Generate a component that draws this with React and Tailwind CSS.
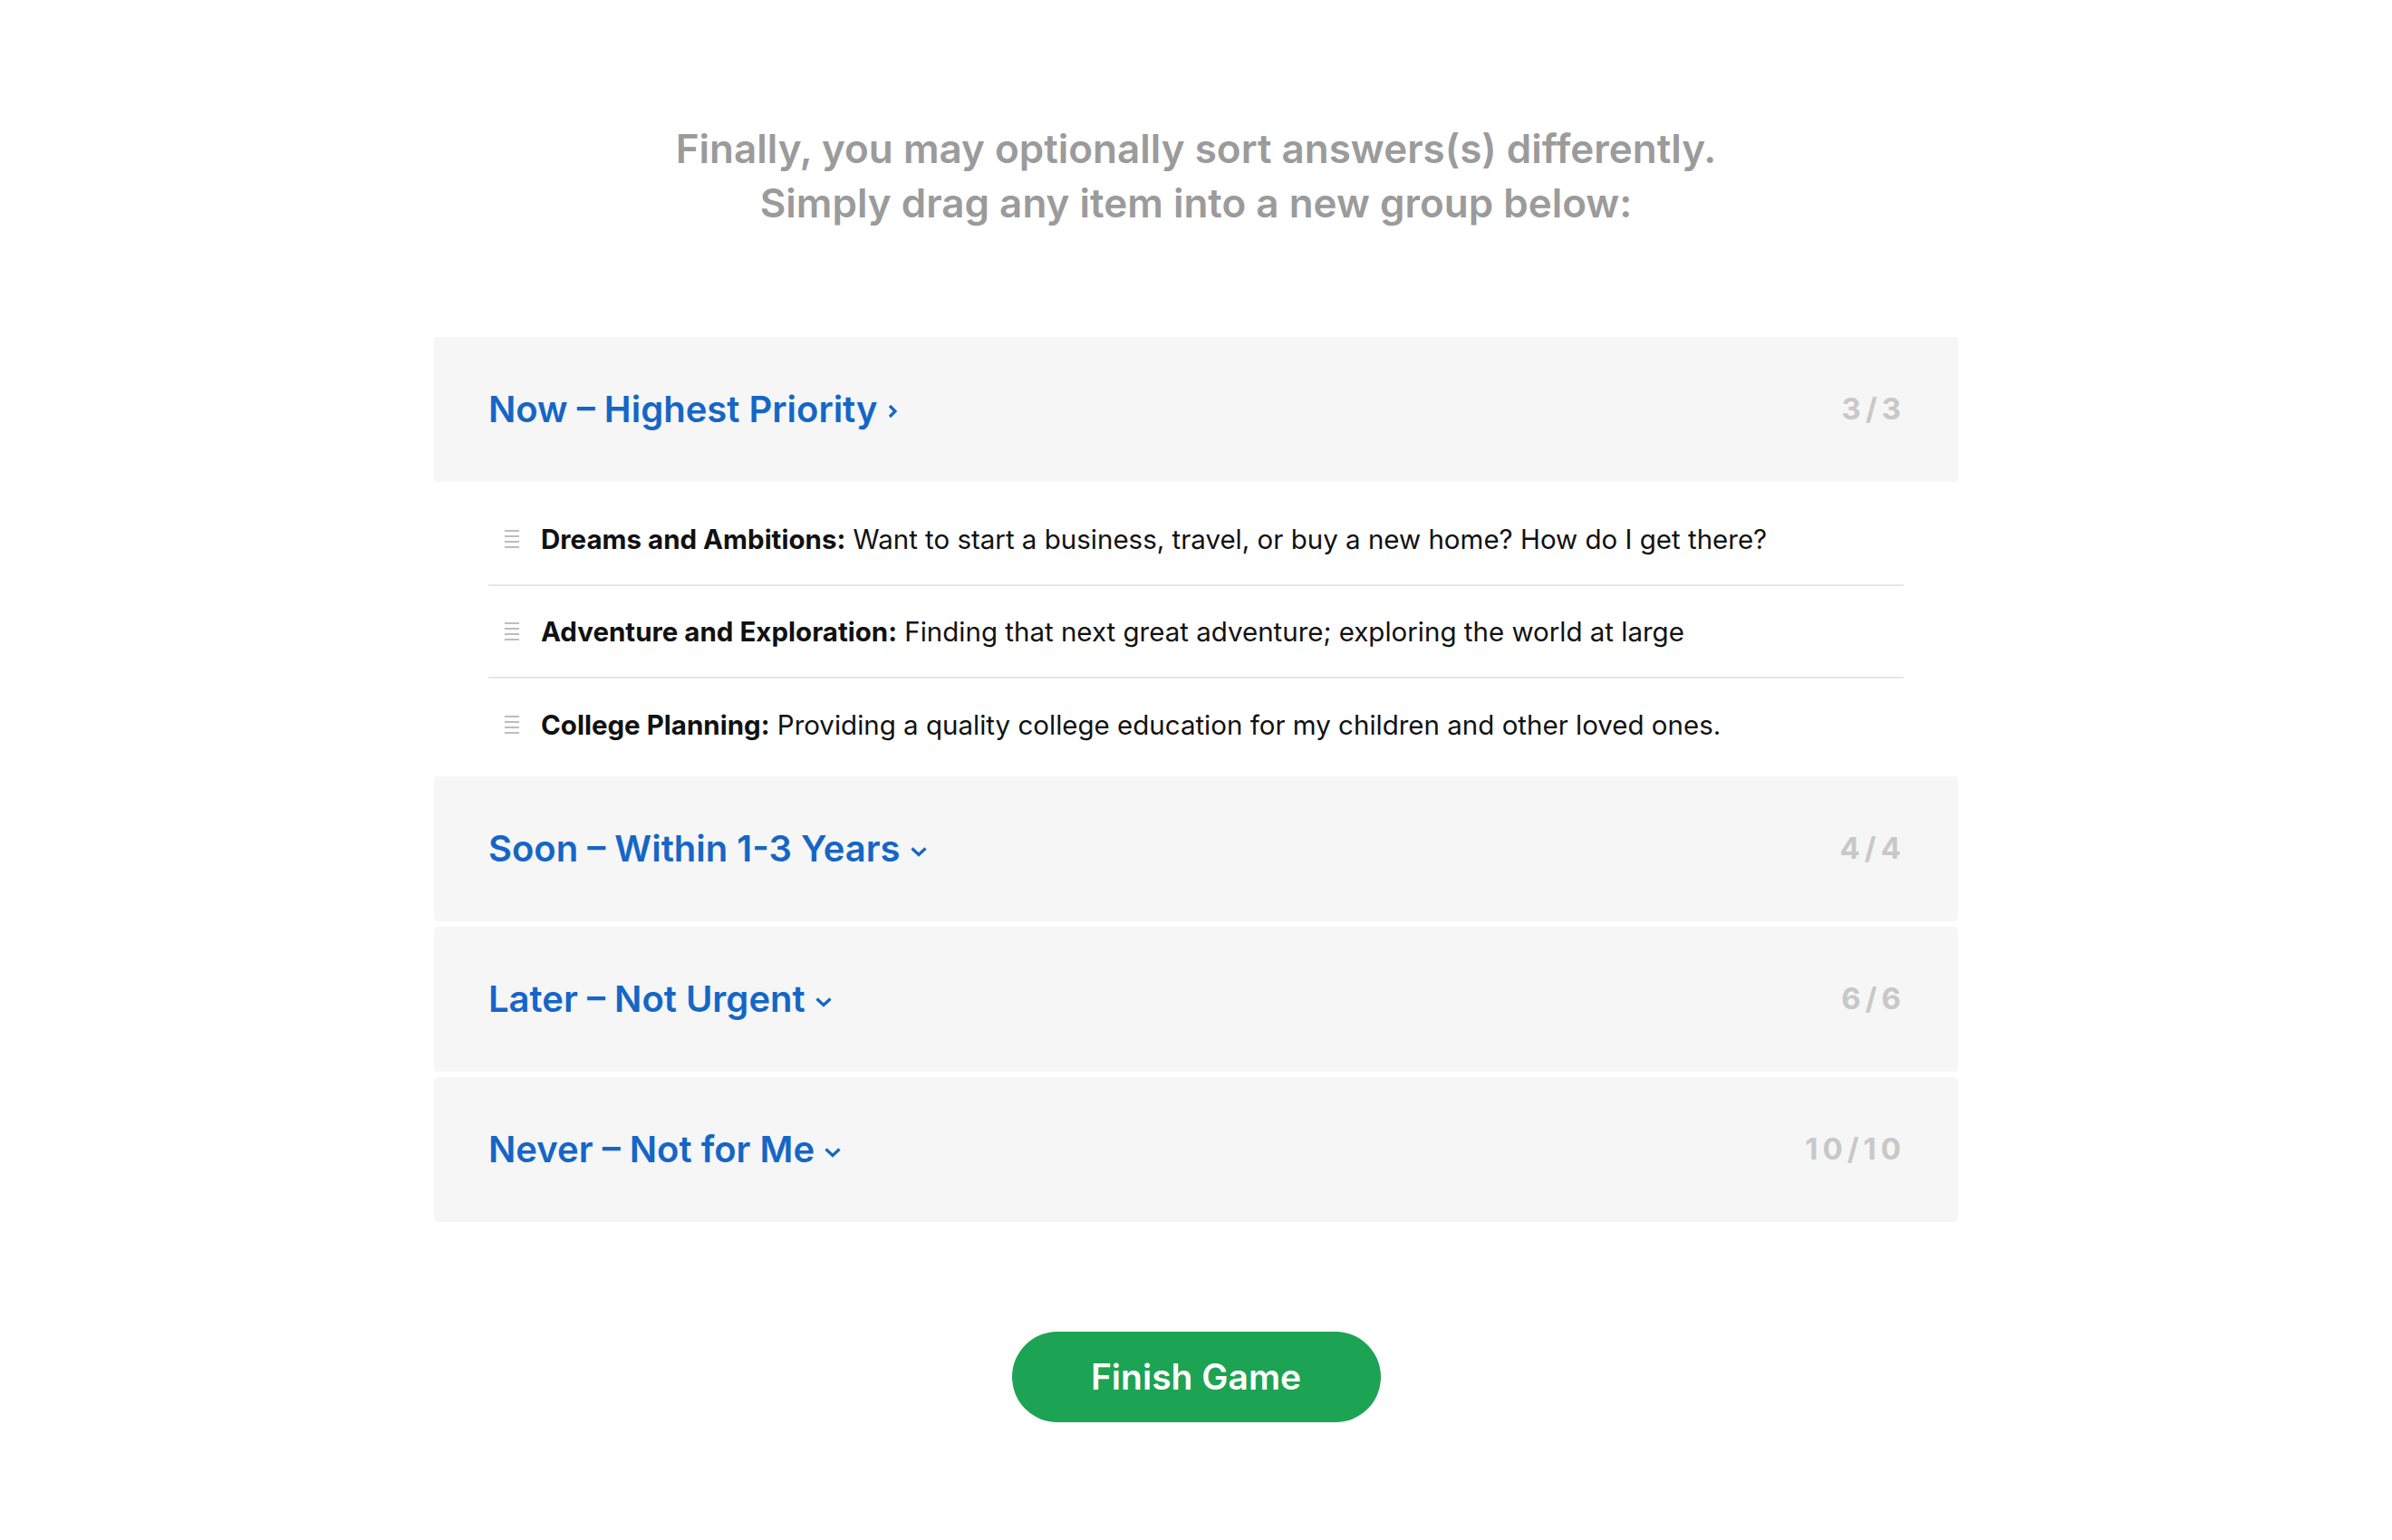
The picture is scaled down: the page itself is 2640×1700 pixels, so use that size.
import React from 'react';

const font = { fontFamily: 'Inter, Lato, sans-serif' };

const groups = [
  { title: 'Now – Highest Priority', count: '3/3', open: true },
  { title: 'Soon – Within 1-3 Years', count: '4/4' },
  { title: 'Later – Not Urgent', count: '6/6' },
  { title: 'Never – Not for Me', count: '10/10' },
];

const items = [
  ['Dreams and Ambitions:', 'Want to start a business, travel, or buy a new home? How do I get there?'],
  ['Adventure and Exploration:', 'Finding that next great adventure; exploring the world at large'],
  ['College Planning:', 'Providing a quality college education for my children and other loved ones.'],
];

function Handle() {
  return (
    <div className="flex flex-col gap-[4px] w-[16px] shrink-0">
      <span className="block h-[2px] bg-[#bdbdbd]" />
      <span className="block h-[2px] bg-[#bdbdbd]" />
      <span className="block h-[2px] bg-[#bdbdbd]" />
      <span className="block h-[2px] bg-[#bdbdbd]" />
    </div>
  );
}

function ChevronRight() {
  return (
    <svg width="12" height="18" viewBox="0 0 12 18" className="ml-[10px] mt-[4px]">
      <path d="M3 3 L9 9 L3 15" fill="none" stroke="#1566c6" strokeWidth="3.2" />
    </svg>
  );
}

function ChevronDown() {
  return (
    <svg width="20" height="12" viewBox="0 0 20 12" className="ml-[10px] mt-[6px]">
      <path d="M2.5 2.5 L10 9.5 L17.5 2.5" fill="none" stroke="#1566c6" strokeWidth="3.2" />
    </svg>
  );
}

function GroupHeader({ title, count, open }) {
  return (
    <div className="h-[160px] bg-[#f6f6f6] rounded-[4px] flex items-center justify-between px-[60px]">
      <div className="flex items-center text-[40px] font-semibold text-[#1566c6]">
        <span>{title}</span>
        {open ? <ChevronRight /> : <ChevronDown />}
      </div>
      <div className="text-[33px] font-bold text-[#c8c8c8] tracking-[5px] mr-[-2px]">{count}</div>
    </div>
  );
}

export default function App() {
  return (
    <div className="min-h-[1700px] bg-white" style={font}>
      <div className="pt-[134px] text-center text-[44px] leading-[60px] font-semibold text-[#9b9b9b]">
        <p>Finally, you may optionally sort answers(s) differently.</p>
        <p>Simply drag any item into a new group below:</p>
      </div>

      <div className="w-[1682px] mx-auto mt-[118px] flex flex-col gap-[6px]">
        {groups.map((g) => (
          <div key={g.title}>
            <GroupHeader {...g} />
            {g.open && (
              <div className="px-[60px] pt-[13px]">
                {items.map(([b, t], i) => (
                  <div
                    key={b}
                    className={`h-[102px] flex items-center gap-[24px] pl-[18px] text-[29.5px] text-[#111] ${
                      i < items.length - 1 ? 'border-b-2 border-[#e6e6e6]' : ''
                    }`}
                  >
                    <Handle />
                    <p>
                      <span className="font-bold">{b}</span> {t}
                    </p>
                  </div>
                ))}
              </div>
            )}
          </div>
        ))}
      </div>

      <div className="flex justify-center mt-[121px]">
        <button className="w-[407px] h-[100px] rounded-full bg-[#1ca353] text-white text-[39px] font-semibold">
          Finish Game
        </button>
      </div>
    </div>
  );
}
